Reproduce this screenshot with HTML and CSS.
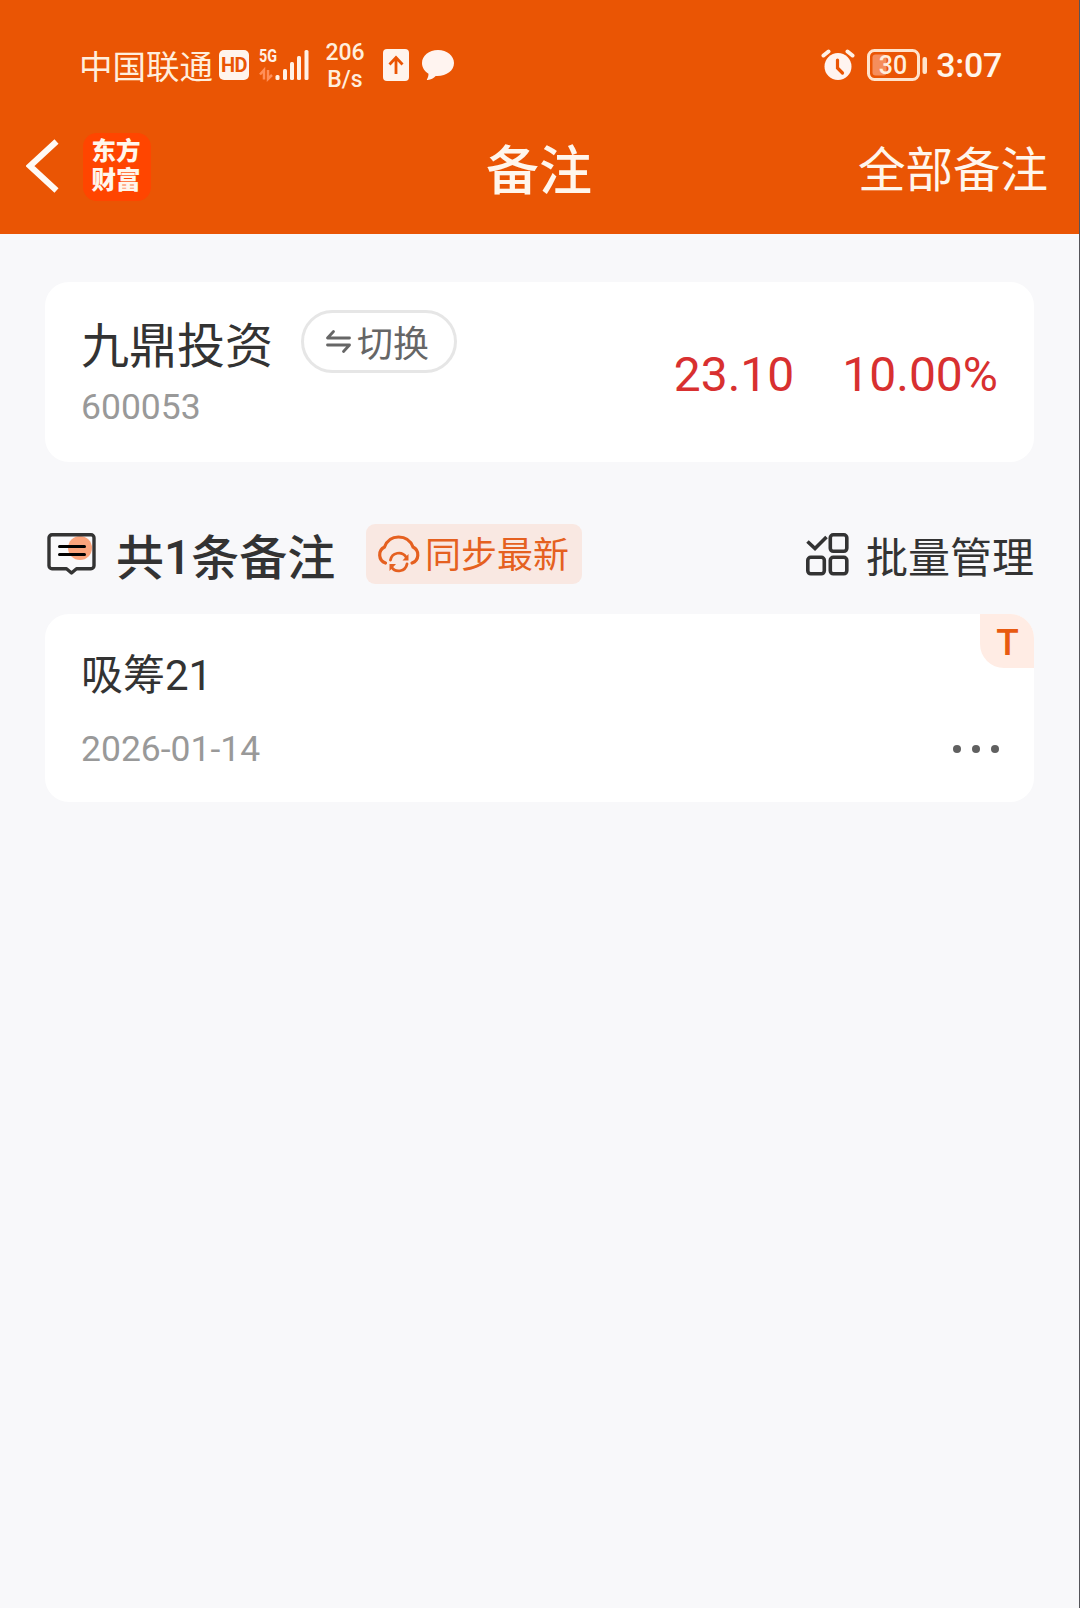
FILE: index.html
```html
<!DOCTYPE html>
<html lang="zh-CN">
<head>
  <meta charset="UTF-8">
  <meta name="viewport" content="width=device-width, initial-scale=1.0">
  <title>备注</title>
  <link rel="stylesheet" href="styles.css">
</head>
<body>
<div class="page">
  <header class="header">
    <div class="status-bar">
      <div class="status-left">
        <span class="carrier">中国联通</span>
        <span class="hd">HD</span>
        <svg class="signal" width="52" height="42" viewBox="0 -5 52 42">
          <text x="0" y="13" class="signal-text" textLength="18" lengthAdjust="spacingAndGlyphs">5G</text>
          <path d="M5 30.500V21L1 25.500M9 21v9l4-4" fill="none" stroke="#ff8f58" stroke-width="2.500"/>
          <g fill="#fff1e6">
            <rect x="16.500" y="26" width="4" height="5" rx="1.500"/>
            <rect x="24" y="20" width="4" height="11" rx="1.500"/>
            <rect x="31" y="13" width="4" height="18" rx="1.500"/>
            <rect x="38" y="7" width="4" height="24" rx="1.500"/>
            <rect x="45.500" y="1" width="4" height="30" rx="1.500"/>
          </g>
        </svg>
        <span class="speed">206<br>B/s</span>
        <svg class="upload" width="26" height="32" viewBox="0 0 26 32">
          <rect width="26" height="32" rx="4" fill="#fff4ec"/>
          <path d="M13 25V9M6.500 15.500L13 8.500l6.500 7" fill="none" stroke="#ea5504" stroke-width="2.800"/>
        </svg>
        <svg class="bubble" width="32" height="31" viewBox="0 0 32 31">
          <path d="M16 0C7 0 0 5.700 0 13c0 4.500 2.700 8.300 6.500 10.700 0 2.300-.6 4-1.500 5.500-.3.600 0 1 .7.900 3.300-.6 6-2 8-4.200C24 26.500 32 21 32 13 32 5.700 25 0 16 0z" fill="#fff4f0"/>
        </svg>
      </div>
      <div class="status-right">
        <svg class="alarm" width="34" height="32" viewBox="0 0 34 32">
          <path d="M2.500 6.500l5-4M31.500 6.500l-5-4" stroke="#fff1e6" stroke-width="4" stroke-linecap="round"/>
          <circle cx="17" cy="17.500" r="13.500" fill="#fff4f0"/>
          <path d="M16.500 11v8l5 5" fill="none" stroke="#ea5504" stroke-width="3.200" stroke-linecap="round"/>
        </svg>
        <svg class="battery" width="60" height="32" viewBox="0 0 60 32">
          <rect x="1.500" y="1.500" width="50" height="29" rx="6" fill="none" stroke="#ffe3cc" stroke-width="3"/>
          <rect x="5.500" y="5.500" width="14" height="21" rx="3" fill="#f58d5c"/>
          <rect x="55.500" y="8" width="4.500" height="17" rx="2" fill="#ffe3cc"/>
          <text x="26" y="24.500" class="battery-text">30</text>
        </svg>
        <span class="clock">3:07</span>
      </div>
    </div>
    <nav class="nav">
      <div class="nav-left">
        <svg class="back" width="34" height="56" viewBox="0 0 34 56">
          <path d="M30.500 3.500L4 28l26.500 24.500" fill="none" stroke="#fffaf5" stroke-width="6"/>
        </svg>
        <div class="logo">东方<br>财富</div>
      </div>
      <h1 class="title">备注</h1>
      <a class="all-notes">全部备注</a>
    </nav>
  </header>

  <main class="content">
    <section class="card stock">
      <div class="stock-info">
        <div class="stock-row">
          <span class="stock-name">九鼎投资</span>
          <button class="switch">
            <svg width="25" height="25" viewBox="0 0 25 25">
              <path d="M23.500 9H1.500L7.500 2.500M1.500 16h22L17.500 22.500" fill="none" stroke="#666" stroke-width="2.800" stroke-linejoin="round" stroke-linecap="round"/>
            </svg>
            <span class="switch-text">切换</span>
          </button>
        </div>
        <div class="stock-code">600053</div>
      </div>
      <div class="quote">
        <span>23.10</span>
        <span>10.00%</span>
      </div>
    </section>

    <section class="toolbar">
      <svg class="note-icon" width="49" height="43" viewBox="0 0 49 43">
        <circle cx="33" cy="15" r="12" fill="#fba47c"/>
        <path d="M5 1.800h39a3 3 0 0 1 3 3v28a3 3 0 0 1-3 3H29.500L24.500 40l-5-4.200H5a3 3 0 0 1-3-3v-28a3 3 0 0 1 3-3z" fill="none" stroke="#333" stroke-width="3.400" stroke-linejoin="round"/>
        <path d="M12.500 13.500h25M12.500 21.500h25" stroke="#000" stroke-width="3" stroke-linecap="round"/>
      </svg>
      <h2 class="count">共<span class="count-num">1</span>条备注</h2>
      <button class="sync">
        <svg width="44" height="38" viewBox="0 0 44 38" fill="none" stroke="#e56020" stroke-width="3.200" stroke-linecap="round">
          <path d="M8.500 28A8.700 8.700 0 0 1 7.500 12C10 5.500 15 2 21.500 2s12 3.500 14.500 10a8.700 8.700 0 0 1-1 16"/>
          <path d="M13.500 25a8.500 8.500 0 0 1 15.500-3M30 29a8.500 8.500 0 0 1-15.500 3" stroke-width="2.800"/>
          <path d="M31.500 19v6.500h-6zM12.500 36v-7h6.500z" fill="#e56020" stroke="none"/>
        </svg>
        <span class="sync-text">同步最新</span>
      </button>
      <a class="manage">
        <svg class="manage-icon" width="43" height="43" viewBox="0 0 43 43" fill="none" stroke="#333" stroke-width="3.600" stroke-linejoin="round">
          <path d="M1.500 8.500l7.500 7L20.500 4" stroke-linejoin="miter"/>
          <rect x="24.300" y="1.800" width="16.500" height="16.500" rx="3"/>
          <rect x="1.800" y="24.300" width="16.500" height="16.500" rx="3"/>
          <rect x="24.300" y="24.300" width="16.500" height="16.500" rx="3"/>
        </svg>
        <span>批量管理</span>
      </a>
    </section>

    <article class="card note">
      <span class="badge">T</span>
      <div class="note-text">吸筹21</div>
      <div class="note-footer">
        <time>2026-01-14</time>
        <div class="more"><i></i><i></i><i></i></div>
      </div>
    </article>
  </main>
</div>
</body>
</html>
```
FILE: styles.css
```css
* {
  box-sizing: border-box;
}

body {
  margin: 0;
  font-family: Roboto, "Noto Sans CJK SC", sans-serif;
  background-color: #f8f8fa;
  color: #333;
}

.page {
  min-height: 1608px;
  border-right: 1px solid #55555a;
}

button {
  font-family: inherit;
  margin: 0;
  padding: 0;
}

svg {
  display: block;
  flex-shrink: 0;
}

/* Header */
.header {
  height: 234px;
  background-color: #ea5504;
  color: #fff6ec;
}

.status-bar {
  height: 100px;
  padding: 29px 77px 0 79px;
  display: flex;
  justify-content: space-between;
}

.status-left,
.status-right {
  height: 72px;
  display: flex;
  align-items: center;
}

.carrier {
  padding-top: 5px;
  font-size: 33.5px;
  line-height: 40px;
  color: #ffeedd;
}

.hd {
  width: 30px;
  height: 30px;
  margin-left: 6px;
  border-radius: 5px;
  background-color: #fff4ec;
  color: #ea5504;
  font-size: 20px;
  font-weight: 700;
  line-height: 31px;
  text-align: center;
  letter-spacing: -0.5px;
}

.signal {
  margin-left: 10px;
}

.signal-text {
  font-size: 19px;
  font-weight: 700;
  fill: #fff1e6;
}

.speed {
  width: 44px;
  margin-left: 12px;
  padding-top: 2px;
  font-size: 23px;
  font-weight: 500;
  line-height: 27px;
  text-align: center;
  color: #ffeedd;
}

.upload {
  margin-left: 16px;
}

.bubble {
  margin-left: 13px;
}

.battery {
  margin-left: 12px;
}

.battery-text {
  font-size: 25px;
  font-weight: 500;
  fill: #ffeedd;
  text-anchor: middle;
}

.clock {
  margin-left: 9px;
  font-size: 34px;
  font-weight: 500;
  line-height: 40px;
  letter-spacing: -0.3px;
}

.nav {
  height: 134px;
  padding: 0 31px 0 26px;
  display: grid;
  grid-template-columns: 1fr auto 1fr;
  align-items: start;
}

.nav-left {
  padding-top: 33px;
  display: flex;
  align-items: flex-start;
}

.back {
  margin-top: 5px;
}

.logo {
  width: 68px;
  height: 68px;
  margin-left: 23px;
  padding: 4px 2px 0 0;
  border-radius: 14px;
  background-color: #ff4500;
  font-size: 24.5px;
  font-weight: 900;
  line-height: 29px;
  text-align: center;
}

.title {
  margin: 40px 0 0 4px;
  font-size: 53px;
  font-weight: 500;
  line-height: 64px;
}

.all-notes {
  margin-top: 39px;
  justify-self: end;
  font-size: 47.5px;
  line-height: 64px;
}

/* Content */
.content {
  padding: 48px 45px 0;
}

.card {
  border-radius: 24px;
  background-color: #fff;
}

.stock {
  height: 180px;
  padding: 28px 36px 0;
  display: flex;
  justify-content: space-between;
}

.stock-row {
  height: 64px;
  display: flex;
  align-items: flex-start;
}

.stock-name {
  padding-top: 5px;
  font-size: 48px;
  line-height: 64px;
}

.switch {
  width: 156px;
  height: 63px;
  margin-left: 28px;
  padding-right: 3px;
  border: 3px solid #e6e6e6;
  border-radius: 32px;
  background-color: #fff;
  color: #666;
  font-size: 36px;
  line-height: 48px;
  display: flex;
  align-items: center;
  justify-content: center;
  gap: 6px;
}

.switch-text {
  padding-top: 7px;
}

.stock-code {
  margin-top: 12px;
  font-size: 35.5px;
  line-height: 42px;
  color: #999;
}

.quote {
  padding-top: 36px;
  font-size: 48px;
  line-height: 58px;
  color: #d83030;
  display: flex;
  gap: 48px;
}

.toolbar {
  height: 152px;
  padding: 62px 0 0 2px;
  display: flex;
  align-items: flex-start;
}

.note-icon {
  margin-top: 9px;
}

.count {
  width: 219px;
  margin: 3px 0 0 20px;
  font-size: 48px;
  font-weight: 500;
  line-height: 64px;
  white-space: nowrap;
}

.count-num {
  line-height: 1;
  vertical-align: 1px;
}

.sync {
  width: 216px;
  height: 60px;
  margin-left: 31px;
  padding-left: 11px;
  border: none;
  border-radius: 9px;
  background-color: #f9e8e2;
  color: #e56020;
  font-size: 36px;
  line-height: 48px;
  display: flex;
  align-items: center;
  gap: 4px;
}

.sync-text {
  padding-top: 3px;
}

.manage {
  margin: 4px 0 0 auto;
  font-size: 42px;
  line-height: 62px;
  display: flex;
  align-items: flex-start;
  gap: 17px;
}

.manage-icon {
  margin-top: 5px;
}

.note {
  position: relative;
  height: 188px;
  padding: 37px 35px 0 36px;
}

.badge {
  position: absolute;
  top: 0;
  right: 0;
  width: 54px;
  height: 54px;
  padding-left: 1px;
  border-radius: 0 24px 0 24px;
  background-color: #ffece4;
  color: #e85a10;
  font-size: 37px;
  font-weight: 500;
  line-height: 58px;
  text-align: center;
}

.note-text {
  font-size: 42px;
  line-height: 50px;
}

.note-footer {
  margin-top: 27px;
  font-size: 35.5px;
  line-height: 42px;
  color: #999;
  display: flex;
  align-items: center;
  justify-content: space-between;
}

.more {
  display: flex;
  gap: 11px;
}

.more i {
  width: 8px;
  height: 8px;
  border-radius: 50%;
  background-color: #606060;
}
```
